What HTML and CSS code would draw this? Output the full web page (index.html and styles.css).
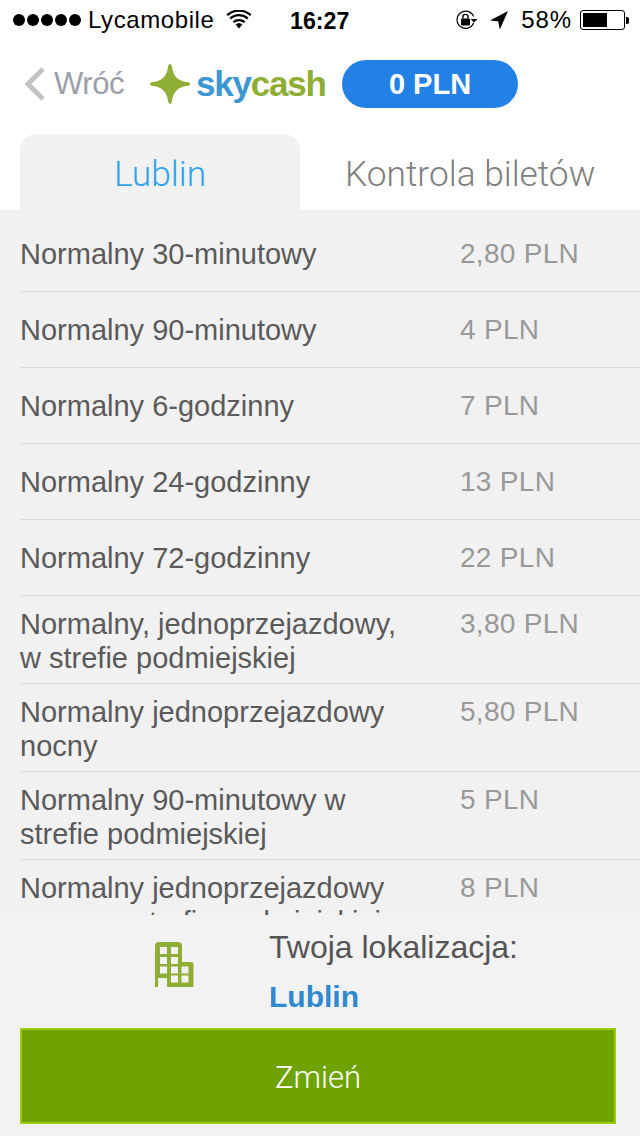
FILE: index.html
```html
<!DOCTYPE html>
<html lang="pl">
<head>
<meta charset="utf-8">
<title>Skycash</title>
<link rel="stylesheet" href="styles.css">
</head>
<body>
<div class="screen">
  <div class="status">
    <div class="status-left">
      <span class="dots"><i></i><i></i><i></i><i></i><i></i></span>
      <span class="carrier">Lycamobile</span>
      <svg class="wifi" width="26" height="20" viewBox="0 0 26 20"><path d="M13 18.5 9.6 14.6a5 5 0 0 1 6.8 0Z" fill="#000"/><path d="M7.4 12.2a8.3 8.3 0 0 1 11.2 0M4.2 8.6a13 13 0 0 1 17.6 0M1.2 5.2a17.4 17.4 0 0 1 23.6 0" fill="none" stroke="#000" stroke-width="2.3"/></svg>
    </div>
    <div class="time">16:27</div>
    <div class="status-right">
      <svg class="lock" width="24" height="20" viewBox="0 0 24 20"><path d="M18.6 6.5A8.6 8.6 0 1 0 18.6 13" fill="none" stroke="#000" stroke-width="1.2"/><path d="M15.5 9h7l-3.5 3.6Z" fill="#000"/><rect x="6" y="8.5" width="9" height="7" rx="1" fill="#000"/><path d="M7.900 8.500V7a2.600 2.600 0 0 1 5.200 0v1.500" fill="none" stroke="#000" stroke-width="1.4"/></svg>
      <svg class="arrow" width="20" height="20" viewBox="0 0 20 20"><path d="M19 1 1 10.6l8.2.6 1.600 8.400Z" fill="#000"/></svg>
      <span class="pct">58%</span>
      <span class="battery"><span class="level"></span></span><span class="nub"></span>
    </div>
  </div>

  <header class="nav">
    <a class="back">
      <svg width="24" height="36" viewBox="0 0 24 36"><path d="M20 3 5 18l15 15" fill="none" stroke="#c3c3c3" stroke-width="5"/></svg>
      <span>Wróć</span>
    </a>
    <div class="logo">
      <svg width="42" height="42" viewBox="0 0 42 42"><path d="M21 1c1 0 1.600 1 2 3 1 8 5 14 15 15 2 .3 3 1 3 2s-1 1.700-3 2c-10 1-14 7-15 15-.4 2-1 3-2 3s-1.600-1-2-3c-1-8-5-14-15-15-2-.3-3-1-3-2s1-1.700 3-2c10-1 14-7 15-15 .4-2 1-3 2-3Z" fill="#8fae35"/></svg>
      <span class="wordmark"><b class="sky">sky</b><b class="cash">cash</b></span>
    </div>
    <div class="balance">0 PLN</div>
  </header>

  <nav class="tabs">
    <div class="tab active">Lublin</div>
    <div class="tab">Kontrola biletów</div>
  </nav>

  <main class="list">
    <div class="row"><div class="name">Normalny 30-minutowy</div><div class="price">2,80 PLN</div></div>
    <div class="row"><div class="name">Normalny 90-minutowy</div><div class="price">4 PLN</div></div>
    <div class="row"><div class="name">Normalny 6-godzinny</div><div class="price">7 PLN</div></div>
    <div class="row"><div class="name">Normalny 24-godzinny</div><div class="price">13 PLN</div></div>
    <div class="row"><div class="name">Normalny 72-godzinny</div><div class="price">22 PLN</div></div>
    <div class="row two"><div class="name">Normalny, jednoprzejazdowy,<br>w strefie podmiejskiej</div><div class="price">3,80 PLN</div></div>
    <div class="row two"><div class="name">Normalny jednoprzejazdowy<br>nocny</div><div class="price">5,80 PLN</div></div>
    <div class="row two"><div class="name">Normalny 90-minutowy w<br>strefie podmiejskiej</div><div class="price">5 PLN</div></div>
    <div class="row two"><div class="name">Normalny jednoprzejazdowy<br>nocny w strefie podmiejskiej</div><div class="price">8 PLN</div></div>
  </main>

  <footer class="foot">
    <div class="location">
      <svg class="building" width="39" height="46" viewBox="0 0 39 46" fill-rule="evenodd"><path fill="#8fae35" d="M0 4Q0 0 4 0H23Q27 0 27 4V20H36Q38.500 20 38.500 23V45H12V36H3V45H0ZM5 5V12H12V5ZM16 5V12H23V5ZM5 15V22H12V15ZM16 15V22H23V15ZM5 24.500V31.500H12V24.500ZM16 24.500V31.500H23V24.500ZM26.500 24.500V31.500H33.500V24.500ZM16 33.500V40.500H23V33.500ZM26.500 33.500V40.500H33.500V33.500Z"/></svg>
      <div class="loc-text">
        <div class="loc-label">Twoja lokalizacja:</div>
        <div class="loc-city">Lublin</div>
      </div>
    </div>
    <button class="change">Zmień</button>
  </footer>
</div>
</body>
</html>
```
FILE: styles.css
```css
* { box-sizing: border-box; }
html, body { margin: 0; padding: 0; }
body { background: #fff; font-family: "Liberation Sans", Arial, sans-serif; }
.screen { width: 640px; height: 1136px; display: flex; flex-direction: column; overflow: hidden; background: #fff; }

.status { height: 40px; flex: none; display: flex; align-items: center; padding: 0 11px 0 13px; color: #000; font-size: 24px; position: relative; }
.status-left { display: flex; align-items: center; }
.dots { display: flex; gap: 2px; margin-right: 7px; }
.dots i { width: 12px; height: 12px; border-radius: 50%; background: #000; display: block; }
.carrier { letter-spacing: 0.6px; }
.wifi { margin-left: 11px; }
.time { font-weight: 700; font-size: 23.200px; position: absolute; left: 290px; top: 7px; line-height: 28px; }
.status-right { margin-left: auto; display: flex; align-items: center; }
.lock { margin-right: 10px; }
.arrow { margin-right: 12px; }
.pct { margin-right: 8px; letter-spacing: 0.9px; }
.battery { width: 45px; height: 20px; border: 1px solid #000; border-radius: 3px; padding: 2px; display: block; }
.level { display: block; width: 24px; height: 100%; background: #000; }
.nub { width: 3px; height: 7px; background: #000; margin-left: 1px; border-radius: 0 2px 2px 0; }

.nav { height: 88px; flex: none; display: flex; align-items: center; padding: 0 0 0 23px; }
.back { display: flex; align-items: center; color: #9b9fab; font-size: 31px; width: 126px; }
.back span { margin-left: 7px; letter-spacing: -0.4px; }
.logo { display: flex; align-items: center; width: 193px; }
.wordmark { font-size: 35px; letter-spacing: -1.2px; margin-left: 5px; }
.sky { color: #3d97d3; }
.cash { color: #8fae35; }
.balance { width: 176px; height: 48px; border-radius: 24px; background: #2381e6; color: #fff; font-size: 29px; font-weight: 700; display: flex; align-items: center; justify-content: center; }

.tabs { height: 82px; flex: none; display: flex; padding: 6px 0 0 20px; }
.tab { font-family: Roboto, sans-serif; font-weight: 300; font-size: 35.300px; color: #808080; display: flex; align-items: center; justify-content: center; padding-top: 4px; }
.tab.active { width: 280px; background: #f1f1f1; border-radius: 16px 16px 0 0; color: #2ea3ea; margin-right: 45px; }

.list { flex: 1; min-height: 0; overflow: hidden; background: #f1f1f1; padding: 6px 0 0 20px; }
.row { height: 76px; display: flex; border-bottom: 1px solid #dcdcdc; padding-top: 20px; font-size: 29px; line-height: 36px; }
.row.two { height: 88px; padding-top: 11px; line-height: 34px; }
.name { width: 440px; color: #5a5a5a; }
.price { color: #999; font-size: 28px; letter-spacing: 0.3px; }

.foot { height: 221px; flex: none; background: #f2f2f2; padding: 0 24px 12px 20px; display: flex; flex-direction: column; justify-content: flex-end; }
.location { display: flex; height: 113px; }
.building { margin: 27px 0 0 135px; flex: none; }
.loc-text { margin-left: 75px; padding-top: 12px; }
.loc-label { font-size: 32px; color: #555; line-height: 40px; }
.loc-city { font-size: 30px; font-weight: 700; color: #3088cf; line-height: 48px; margin-top: 6px; }
.change { width: 596px; height: 96px; background: #6ea300; border: 2px solid #9ccc0a; color: #fff; font-family: Roboto, sans-serif; font-weight: 300; font-size: 31px; padding: 3px 0 0; }
```
